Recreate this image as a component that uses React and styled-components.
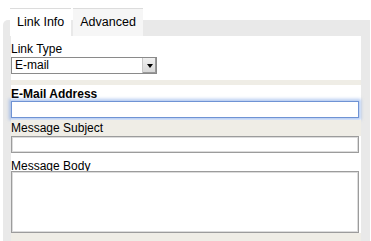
import styled, { createGlobalStyle } from 'styled-components';

const GlobalStyle = createGlobalStyle`
    body {
        margin: 0;
        background: #ffffff;
        font-family: 'Liberation Sans', Arial, sans-serif;
    }
`;

const Page = styled.div`
    width: 371px;
    height: 241px;
    padding: 8px 0 0 3px;
    box-sizing: border-box;
    overflow: hidden;
`;

const TabBar = styled.div`
    display: flex;
    margin-left: 7px;
    height: 28px;
    margin-bottom: -16px;
    position: relative;
    z-index: 1;
`;

const Tab = styled.div`
    box-sizing: border-box;
    height: 28px;
    padding: 6px 7px 0 7px;
    font-size: 12.5px;
    color: #000;
    background: ${({ $active }) => ($active ? '#ffffff' : '#f6f6f6')};
    border-top: 1px solid #dcdcdc;
    margin-right: ${({ $active }) => ($active ? '2px' : '0')};
`;

const Panel = styled.div`
    width: 367px;
    height: 233px;
    box-sizing: border-box;
    background: #e9e9e9;
    border-top-left-radius: 5px;
    padding: 16px 9px 0 8px;
`;

const Content = styled.div`
    background: #ffffff;
    display: flex;
    flex-direction: column;
`;

const Block = styled.div`
    display: flex;
    flex-direction: column;
    padding: ${({ $pad }) => $pad || '0'};
    background: ${({ $beige }) => ($beige ? '#efede6' : '#ffffff')};
`;

const Label = styled.div`
    font-size: 12px;
    line-height: 14px;
    height: ${({ $h }) => $h || '14px'};
    font-weight: ${({ $bold }) => ($bold ? 'bold' : 'normal')};
    color: #000;
`;

const Spacer = styled.div`
    height: ${({ $h }) => $h};
    background: ${({ $beige }) => ($beige ? '#efede6' : '#ffffff')};
`;

const Select = styled.div`
    box-sizing: border-box;
    width: 146px;
    height: 17px;
    border: 1px solid #8a8a8a;
    display: flex;
    align-items: stretch;
    background: #fff;
`;

const SelectText = styled.div`
    flex: 1;
    font-size: 12px;
    line-height: 15px;
    padding-left: 3px;
`;

const SelectButton = styled.div`
    width: 13px;
    background: linear-gradient(#f0f0f0, #d6d6d6);
    border-left: 1px solid #c8c8c8;
    display: flex;
    align-items: center;
    justify-content: center;
    box-shadow: inset -1px -1px 0 #999;
`;

const Arrow = styled.div`
    width: 0;
    height: 0;
    border-left: 3px solid transparent;
    border-right: 3px solid transparent;
    border-top: 4px solid #000;
`;

const Input = styled.div`
    box-sizing: border-box;
    width: 348px;
    height: ${({ $h }) => $h || '17px'};
    background: #fff;
    border: 1px solid ${({ $focus }) => ($focus ? '#6f93d4' : '#9c9c9c')};
    box-shadow: ${({ $focus }) =>
        $focus
            ? '0 0 3px 2px rgba(120, 160, 230, 0.55)'
            : 'inset 0 0 0 1px #dcdcdc'};
`;

const App = () => (
    <Page>
        <GlobalStyle />
        <TabBar>
            <Tab $active>Link Info</Tab>
            <Tab>Advanced</Tab>
        </TabBar>
        <Panel>
            <Content>
                <Block $pad="6px 0 6px 0">
                    <Label $h="15px">Link Type</Label>
                    <Select>
                        <SelectText>E-mail</SelectText>
                        <SelectButton>
                            <Arrow />
                        </SelectButton>
                    </Select>
                </Block>
                <Spacer $h="5px" $beige />
                <Block $pad="2px 0 2px 0">
                    <Label $bold>E-Mail Address</Label>
                    <Input $focus />
                </Block>
                <Block $beige $pad="1px 0 1px 0">
                    <Label>Message Subject</Label>
                </Block>
                <Block $pad="0 0 6px 0">
                    <Input />
                </Block>
                <Block>
                    <Label $h="12px">Message Body</Label>
                    <Input $h="62px" />
                </Block>
                <Spacer $h="8px" $beige />
            </Content>
        </Panel>
    </Page>
);

export default App;
